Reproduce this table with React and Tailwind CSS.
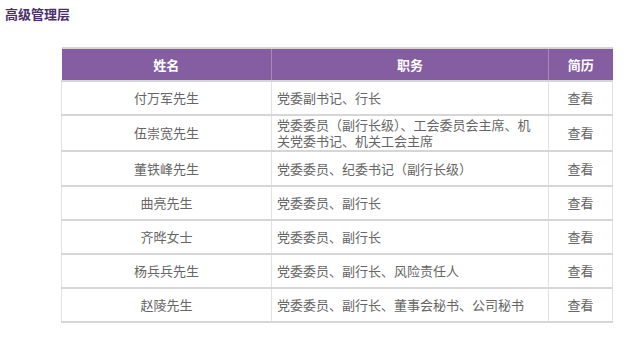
const rows = [
  ["付万军先生", "党委副书记、行长"],
  ["伍崇宽先生", "党委委员（副行长级）、工会委员会主席、机关党委书记、机关工会主席"],
  ["董铁峰先生", "党委委员、纪委书记（副行长级）"],
  ["曲亮先生", "党委委员、副行长"],
  ["齐晔女士", "党委委员、副行长"],
  ["杨兵兵先生", "党委委员、副行长、风险责任人"],
  ["赵陵先生", "党委委员、副行长、董事会秘书、公司秘书"],
];

export default function App() {
  return (
    <div
      className="w-[640px] h-[351px] bg-white overflow-hidden"
      style={{ fontFamily: '"Microsoft YaHei", "Noto Sans CJK SC", sans-serif' }}
    >
      <h1 className="pl-[5px] pt-[5px] text-[13px] leading-[18px] font-bold text-[#4b2f6d]">高级管理层</h1>
      <div className="pl-[61px] pt-[24px]">
        <table className="w-[552px] border-collapse text-[13px] leading-4 text-[#666]">
          <thead>
            <tr className="bg-[#845ea0] text-white font-bold border-t-2 border-[#d4d4d4]">
              <th className="h-[33px] w-[210px] border-r border-[#a58bba] font-bold">姓名</th>
              <th className="w-[277px] border-r border-[#a58bba] font-bold">职务</th>
              <th className="font-bold">简历</th>
            </tr>
          </thead>
          <tbody>
            {rows.map(([name, title], i) => (
              <tr key={i} className="border-t-2 border-b-2 border-[#d6d6d6]">
                <td className={`${i === 1 ? "h-[36px]" : i === 2 ? "h-[35px]" : "h-[34px]"} text-center border-l border-r border-[#e2e2e2]`}>{name}</td>
                <td className="px-[5px] border-r border-[#e2e2e2]">{title}</td>
                <td className="text-center border-r border-[#e2e2e2]">查看</td>
              </tr>
            ))}
          </tbody>
        </table>
      </div>
    </div>
  );
}
